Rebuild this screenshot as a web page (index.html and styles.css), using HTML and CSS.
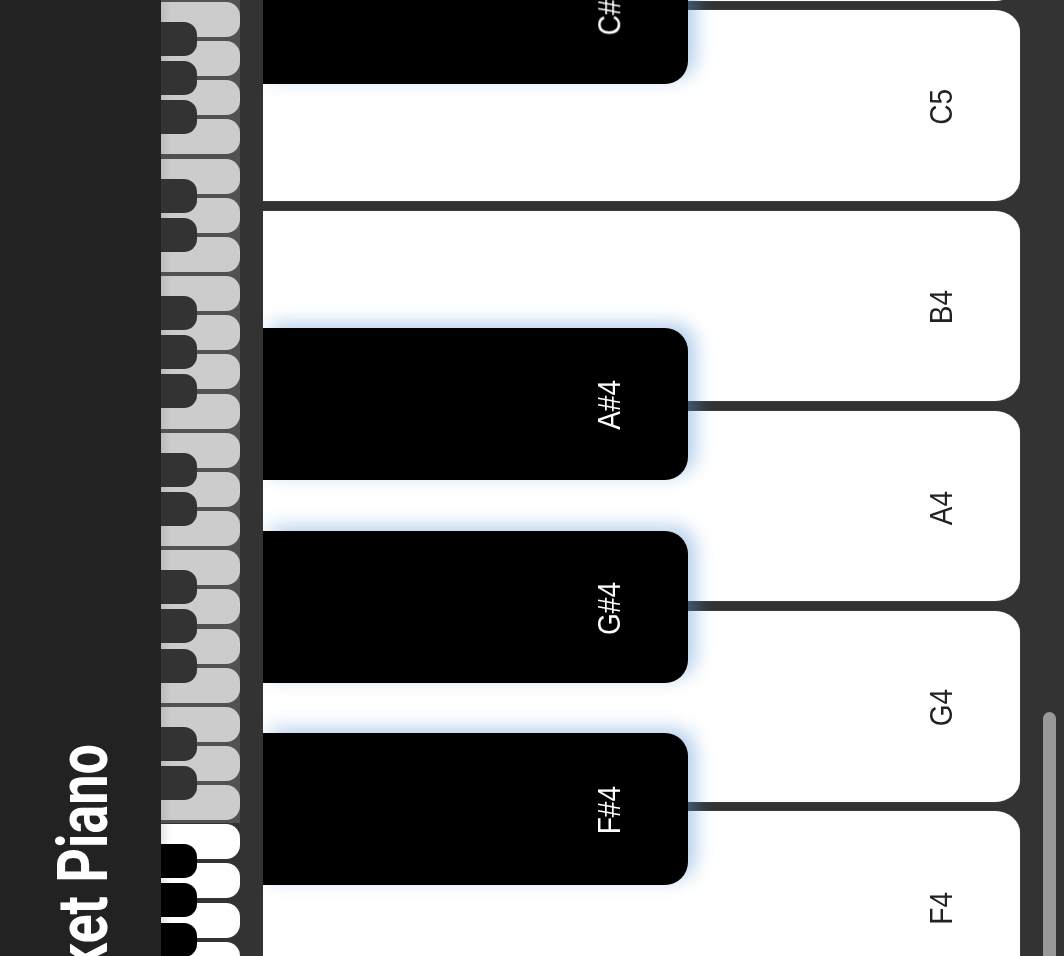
FILE: index.html
```html
<!DOCTYPE html>
<html lang="en">
<head>
    <meta charset="UTF-8">
    <meta name="viewport" content="width=device-width, initial-scale=1.0">
    <title>Pocket Piano</title>
    <link rel="stylesheet" href="styles.css">
</head>
<body>
    <div class="app">
        <div class="sidebar">
            <h1 class="title">Pocket Piano</h1>
        </div>

        <!-- Small overview keyboard, the grey part is outside the visible range -->
        <div class="mini">
            <div class="mini-keys">
                <div class="mini-white"></div>
                <div class="mini-white has-black"></div>
                <div class="mini-white has-black"></div>
                <div class="mini-white has-black"></div>
                <div class="mini-white"></div>
                <div class="mini-white has-black"></div>
                <div class="mini-white has-black"></div>
                <div class="mini-white"></div>
                <div class="mini-white has-black"></div>
                <div class="mini-white has-black"></div>
                <div class="mini-white has-black"></div>
                <div class="mini-white"></div>
                <div class="mini-white has-black"></div>
                <div class="mini-white has-black"></div>
                <div class="mini-white"></div>
                <div class="mini-white has-black"></div>
                <div class="mini-white has-black"></div>
                <div class="mini-white has-black"></div>
                <div class="mini-white"></div>
                <div class="mini-white has-black"></div>
                <div class="mini-white has-black"></div>
                <div class="mini-white"></div>
                <div class="mini-white has-black"></div>
                <div class="mini-white has-black"></div>
                <div class="mini-white has-black"></div>
                <div class="mini-white"></div>
                <div class="mini-range"></div>
            </div>
        </div>

        <div class="piano">
            <div class="white-key key-top"></div>
            <div class="white-key">
                <div class="black-key cs5"><span class="label">C#5</span></div>
                <span class="label">C5</span>
            </div>
            <div class="white-key"><span class="label">B4</span></div>
            <div class="white-key">
                <div class="black-key as4"><span class="label">A#4</span></div>
                <span class="label">A4</span>
            </div>
            <div class="white-key">
                <div class="black-key gs4"><span class="label">G#4</span></div>
                <span class="label">G4</span>
            </div>
            <div class="white-key">
                <div class="black-key fs4"><span class="label">F#4</span></div>
                <span class="label">F4</span>
            </div>
        </div>
    </div>

    <div class="scrollbar"></div>
</body>
</html>
```

FILE: styles.css
```css
html, body {
    margin: 0;
    height: 100%;
    overflow: hidden;
    background-color: #333;
}

.app {
    display: flex;
    height: 956px;
    overflow: hidden;
    filter: blur(0.5px);
}

.sidebar {
    width: 161px;
    flex-shrink: 0;
    padding-top: 744px;
    background-color: #222;
    box-sizing: border-box;
}

.title {
    margin: 0 0 0 55px;
    width: 58px;
    font-family: Roboto, sans-serif;
    font-size: 54px;
    line-height: 58px;
    font-weight: 700;
    color: #fff;
    white-space: nowrap;
    writing-mode: vertical-rl;
    transform: rotate(180deg) scaleX(1.3);
}

/* overview keyboard */
.mini {
    width: 102px;
    flex-shrink: 0;
    background-color: #333;
}

.mini-keys {
    position: relative;
    display: flex;
    flex-direction: column;
    gap: 4.17px;
    width: 79px;
    margin-top: -37.17px;
}

.mini-white {
    position: relative;
    flex-shrink: 0;
    height: 35px;
    background: linear-gradient(to right, #e6e6e6, #fff 10px);
    border-radius: 0 14px 14px 0;
}

.has-black::after {
    content: "";
    position: absolute;
    z-index: 1;
    left: 0;
    top: 20px;
    width: 36px;
    height: 34px;
    background-color: #000;
    border-radius: 0 13px 13px 0;
}

.mini-range {
    position: absolute;
    z-index: 2;
    left: 0;
    right: 0;
    top: 0;
    height: 860px;
    background-color: rgba(128, 128, 128, 0.4);
}

/* main keys */
.piano {
    flex: 1;
    display: flex;
    flex-direction: column;
    gap: 9.8px;
    padding-right: 44px;
    margin-top: -190px;
    overflow: hidden;
}

.white-key {
    position: relative;
    flex-shrink: 0;
    display: flex;
    align-items: center;
    justify-content: flex-end;
    height: 190.5px;
    padding: 3px 63px 0 0;
    box-sizing: border-box;
    background-color: #fff;
    border-radius: 0 25px 25px 0 / 0 22px 22px 0;
    box-shadow: 0 0 1px #888;
    color: #222;
}

.black-key {
    position: absolute;
    z-index: 1;
    left: 0;
    display: flex;
    align-items: center;
    justify-content: flex-end;
    width: 425px;
    height: 152px;
    padding: 2px 63px 0 0;
    box-sizing: border-box;
    background-color: #000;
    border-radius: 0 23px 23px 0;
    box-shadow: 8px -5px 18px rgba(90, 150, 210, 0.45);
    color: #fff;
}

.cs5 { top: -78px; }
.as4 { top: -83px; }
.gs4 { top: -80px; }
.fs4 { top: -78px; }

.label {
    font-family: "Liberation Sans", Arial, sans-serif;
    font-size: 28px;
    line-height: 30px;
    writing-mode: vertical-rl;
    transform: rotate(180deg) scaleX(1.15);
}

.scrollbar {
    position: absolute;
    left: 1043px;
    top: 712px;
    width: 13px;
    height: 260px;
    background-color: #999;
    border-radius: 7px;
}
```
